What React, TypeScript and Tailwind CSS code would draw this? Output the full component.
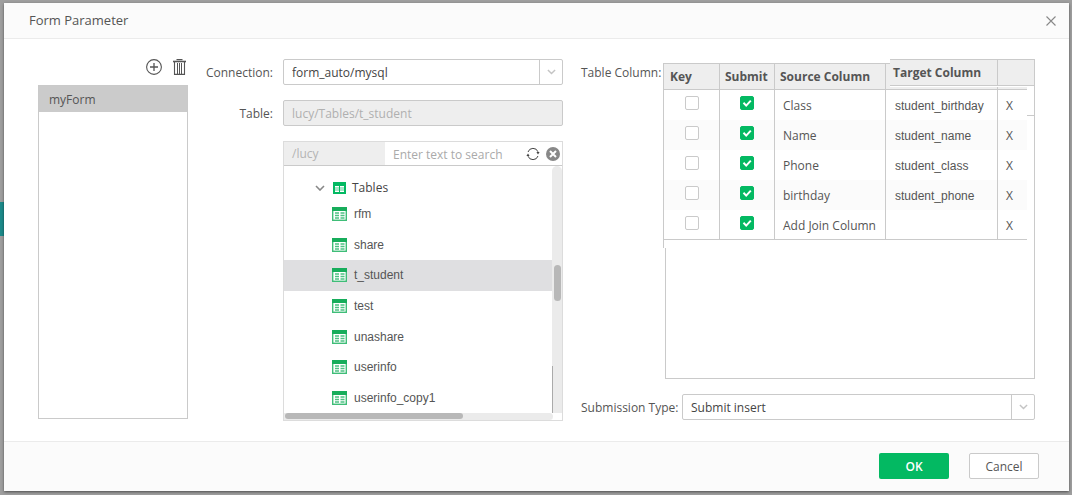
import { useState } from 'react';

const TREE_ITEMS = ['rfm', 'share', 't_student', 'test', 'unashare', 'userinfo', 'userinfo_copy1'];

const COLUMNS = [
  { source: 'Class', target: 'student_birthday' },
  { source: 'Name', target: 'student_name' },
  { source: 'Phone', target: 'student_class' },
  { source: 'birthday', target: 'student_phone' },
  { source: 'Add Join Column', target: '' },
];

const HEAD = 'flex h-[27px] items-center border-t border-b border-[#cacaca] bg-[#eee] pt-px';

function ChevronIcon({ className }: { className: string }) {
  return (
    <svg viewBox="0 0 10 6" fill="none" stroke="currentColor" className={className} aria-hidden="true">
      <path d="M1 1l4 4 4-4" strokeWidth="1.6" />
    </svg>
  );
}

function TableIcon() {
  return (
    <svg width="15" height="14" viewBox="0 0 15 14" className="shrink-0" aria-hidden="true">
      <rect x="0.7" y="0.7" width="13.6" height="12.6" fill="#fff" stroke="#3fbd78" strokeWidth="1.4" />
      <path d="M0 0h15v4H0z" fill="#17ad5b" />
      <path d="M3 6h4M3 8.5h4M3 11h4M8.5 6h4M8.5 8.5h4M8.5 11h4" stroke="#4cc182" strokeWidth="1.5" />
    </svg>
  );
}

function Select({ id, options }: { id: string; options: string[] }) {
  return (
    <div className="relative h-[26px] min-w-0 flex-1">
      <select
        id={id}
        className="h-full w-full appearance-none rounded-xs border border-[#cacaca] bg-white pt-px pr-7 pl-2 text-[#444] outline-none"
      >
        {options.map((option) => (
          <option key={option}>{option}</option>
        ))}
      </select>
      <span className="pointer-events-none absolute inset-y-0 right-0 flex w-6 items-center justify-center border-l border-[#cacaca] text-[#c4c4c4]">
        <ChevronIcon className="w-[9px]" />
      </span>
    </div>
  );
}

function Check({ label, defaultChecked = false }: { label: string; defaultChecked?: boolean }) {
  return (
    <label className="mx-auto mb-1 grid size-[14px]">
      <input
        type="checkbox"
        aria-label={label}
        defaultChecked={defaultChecked}
        className="peer size-[14px] appearance-none rounded-xs border border-[#cacaca] bg-white [grid-area:1/1] checked:border-[#03b962] checked:bg-[#03b962]"
      />
      <svg
        viewBox="0 0 14 14"
        fill="none"
        stroke="#fff"
        strokeWidth="2"
        className="pointer-events-none invisible size-[14px] [grid-area:1/1] peer-checked:visible"
        aria-hidden="true"
      >
        <path d="M3.5 6.8l2.7 2.8 4.6-5" />
      </svg>
    </label>
  );
}

function FormList() {
  return (
    <div className="flex w-[150px] shrink-0 flex-col">
      <div className="flex h-[26px] items-start justify-end gap-[10px] pr-px">
        <button type="button" aria-label="Add form" className="text-[#555]">
          <svg width="16" height="16" viewBox="0 0 16 16" fill="none" stroke="currentColor">
            <circle cx="8" cy="8" r="7.4" strokeWidth="1.1" />
            <path d="M8 4v8M4 8h8" strokeWidth="1.3" />
          </svg>
        </button>
        <button type="button" aria-label="Delete form" className="text-[#555]">
          <svg width="15" height="16" viewBox="0 0 15 16" fill="none" stroke="currentColor">
            <path d="M4.5 0.6h6" strokeWidth="1.2" />
            <path d="M1 2.5h13" strokeWidth="1.6" />
            <path d="M2.5 3v12.4h10V3" strokeWidth="1.1" />
            <path d="M5.5 4v11M7.5 4v11M9.5 4v11" strokeWidth="1" />
          </svg>
        </button>
      </div>
      <ul className="flex-1 border border-[#cacaca]">
        <li className="flex h-[26px] items-center bg-[#cbcbcb] px-[10px] pt-[2px]">myForm</li>
      </ul>
    </div>
  );
}

function TableTree() {
  const [selected, setSelected] = useState('t_student');

  return (
    <div className="flex min-w-0 flex-1 flex-col border border-[#dcdcdc]">
      <div className="flex h-6 items-center border-b border-[#cacaca]">
        <span className="flex h-full w-[101px] shrink-0 items-center bg-[#eee] pt-px pl-2 text-[#b4b4b4]">
          /lucy
        </span>
        <input
          type="text"
          aria-label="Search tables"
          placeholder="Enter text to search"
          className="h-full min-w-0 flex-1 px-2 pt-px outline-none placeholder:text-[#aaa]"
        />
        <button type="button" aria-label="Refresh" className="mr-[6px] shrink-0 text-[#444]">
          <svg width="14" height="14" viewBox="0 0 14 14" fill="none" stroke="currentColor">
            <path d="M2 5a5.3 5.3 0 0 1 10-.2M12 9a5.3 5.3 0 0 1-10 .2" />
            <path d="M10.4 5h3.2L12 7.4zM.4 9h3.2L2 6.6z" fill="currentColor" stroke="none" />
          </svg>
        </button>
        <button type="button" aria-label="Clear" className="mr-[2px] shrink-0 text-[#888]">
          <svg width="14" height="14" viewBox="0 0 14 14">
            <circle cx="7" cy="7" r="7" fill="currentColor" />
            <path d="M4 4l6 6M10 4l-6 6" stroke="#fff" strokeWidth="2" />
          </svg>
        </button>
      </div>
      <div className="flex flex-1">
        <div className="flex min-w-0 flex-1 flex-col">
          <div className="flex h-[33px] items-end pb-[3px] pl-[31px]">
            <button type="button" className="flex items-center gap-2 text-[#444]">
              <ChevronIcon className="w-[10px] text-[#888]" />
              <span className="flex items-center gap-[6px]">
                <svg width="13" height="12" viewBox="0 0 13 12" aria-hidden="true">
                  <path d="M0 0h13v12H0z" fill="#03b962" />
                  <path d="M2 4h4v6H2zM7 4h4v6H7z" fill="#fff" />
                  <path d="M2 6h9M2 8h9" stroke="#03b962" strokeWidth="0.7" />
                </svg>
                Tables
              </span>
            </button>
          </div>
          <ul className="flex flex-1 flex-col font-['Liberation_Sans',sans-serif]">
            {TREE_ITEMS.map((item) => (
              <li key={item} className="flex min-h-[30px] flex-1">
                <button
                  type="button"
                  onClick={() => setSelected(item)}
                  className={`flex w-full items-center gap-[7px] pl-12 ${
                    item === selected ? 'bg-[#dfdfe1]' : ''
                  }`}
                >
                  <TableIcon />
                  {item}
                </button>
              </li>
            ))}
          </ul>
        </div>
        <div className="flex w-[10px] shrink-0 flex-col rounded-t-md bg-[#ebebeb] pt-[99px]">
          <div className="mr-px ml-[2px] h-9 rounded-full bg-[#b8b8b8]" />
          <div className="mt-[65px] flex-1 border-l border-[#aaa]" />
        </div>
      </div>
      <div className="mr-[9px] h-[7px] rounded-r-full bg-[#ebebeb] px-px">
        <div className="h-[6px] w-2/3 rounded-full bg-[#b8b8b8]" />
      </div>
    </div>
  );
}

function ColumnTable() {
  return (
    <div className="flex min-w-0 flex-1 flex-col border-r border-[#cacaca]">
      <table className="w-full table-fixed border-separate border-spacing-0 text-left">
        <colgroup>
          <col className="w-[57px]" />
          <col className="w-[55px]" />
          <col className="w-[111px]" />
          <col />
          <col className="w-[29px]" />
          <col className="w-[7px]" />
        </colgroup>
        <thead className="font-bold text-[#555]">
          <tr className="h-[31px]">
            <th className="p-0 align-bottom">
              <div className={`${HEAD} border-r border-l pl-[6px]`}>Key</div>
            </th>
            <th className="p-0 align-bottom">
              <div className={`${HEAD} border-r pl-[5px]`}>Submit</div>
            </th>
            <th className="p-0 align-bottom">
              <div className={`${HEAD} border-r pl-[5px]`}>Source Column</div>
            </th>
            <th className="p-0 align-top">
              <div className="flex">
                <div className={`${HEAD} mt-1 w-1`} />
                <div className="flex-1">
                  <div className={`${HEAD} border-r pl-[3px]`}>Target Column</div>
                  <div className="mt-px h-[3px] border-r border-b border-[#cacaca] bg-[#eee]" />
                </div>
              </div>
            </th>
            <th className="p-0 align-top" aria-label="Remove">
              <div className={HEAD} />
              <div className="mt-px h-[3px] border-b border-[#cacaca] bg-[#eee]" />
            </th>
            <td className="p-0 align-top">
              <div className={HEAD} />
            </td>
          </tr>
        </thead>
        <tbody className="[&_td]:border-[#cacaca] [&_td]:p-0 [&>tr:last-child>td:not(:last-child)]:border-b [&>tr:nth-child(even)>td:not(:last-child)]:bg-[#fbfbfb]">
          {COLUMNS.map((column, index) => (
            <tr key={column.source} className="h-[30px]">
              <td className="border-r border-l">
                <Check label={`${column.source} key`} />
              </td>
              <td className="border-r">
                <Check label={`${column.source} submit`} defaultChecked />
              </td>
              <td className="border-r">
                <div className="pt-[2px] pl-2">{column.source}</div>
              </td>
              <td className="border-r font-['Liberation_Sans',sans-serif]">
                <div className="pt-[2px] pl-[9px]">{column.target}</div>
              </td>
              <td>
                <button type="button" aria-label={`Remove ${column.source}`} className="block pt-[2px] pl-2">
                  X
                </button>
              </td>
              <td className="align-top">
                {index === 0 && <div className="h-[26px] border-b border-[#cacaca]" />}
              </td>
            </tr>
          ))}
        </tbody>
      </table>
      <div className="h-2 w-px shrink-0 bg-[#cacaca]" />
      <div className="ml-[2px] flex-1 border-b border-l border-[#cacaca]" />
    </div>
  );
}

export default function App() {
  return (
    <div className="flex min-h-screen bg-[#9f9f9f] font-['Open_Sans','Noto_Sans',sans-serif] text-xs text-[#555]">
      <div className="flex w-1 shrink-0 flex-col pt-[202px]" aria-hidden="true">
        <div className="h-[34px] bg-[#1c8a8a]" />
      </div>
      <div
        role="dialog"
        aria-label="Form Parameter"
        className="mt-[3px] mr-[3px] mb-1 flex min-w-0 flex-1 flex-col bg-white shadow-sm shadow-black/40"
      >
        <header className="flex h-9 shrink-0 items-center justify-between border-b border-[#ebebeb] bg-[#fbfbfb] pr-3 pl-[25px]">
          <h1 className="pt-px text-[13px]">Form Parameter</h1>
          <button type="button" aria-label="Close" className="text-[#888]">
            <svg width="12" height="12" viewBox="0 0 12 12" fill="none" stroke="currentColor">
              <path d="M1.5 1.5l9 9M10.5 1.5l-9 9" strokeWidth="1.1" />
            </svg>
          </button>
        </header>

        <main className="flex flex-1 px-[34px] py-5">
          <div className="mb-[2px] flex">
            <FormList />
          </div>

          <div className="ml-3 flex w-[363px] shrink-0 flex-col gap-[15px]">
            <div className="flex items-center gap-[10px]">
              <label htmlFor="connection" className="w-[73px] pt-px text-right whitespace-nowrap">
                Connection:
              </label>
              <Select id="connection" options={['form_auto/mysql']} />
            </div>
            <div className="flex items-center gap-[10px]">
              <label htmlFor="table" className="w-[73px] pt-px text-right">
                Table:
              </label>
              <input
                id="table"
                type="text"
                readOnly
                value="lucy/Tables/t_student"
                className="h-[26px] min-w-0 flex-1 rounded-xs border border-[#cacaca] bg-[#eee] px-2 pt-px text-[#b0b0b0] outline-none"
              />
            </div>
            <div className="flex flex-1 pl-[83px]">
              <TableTree />
            </div>
          </div>

          <div className="ml-[18px] flex min-w-0 flex-1 flex-col gap-[15px] pb-px">
            <div className="flex flex-1">
              <span className="w-[82px] shrink-0 pt-[6px] whitespace-nowrap">Table Column:</span>
              <ColumnTable />
            </div>
            <div className="flex items-center">
              <label htmlFor="submission" className="w-[101px] shrink-0 pt-px whitespace-nowrap">
                Submission Type:
              </label>
              <Select id="submission" options={['Submit insert']} />
            </div>
          </div>
        </main>

        <footer className="flex shrink-0 justify-end gap-5 border-t border-[#ebebeb] bg-[#fbfbfb] pt-[11px] pr-[30px] pb-3">
          <button type="button" className="h-[26px] w-[70px] rounded-xs bg-[#03b962] pt-px font-semibold text-white">
            OK
          </button>
          <button type="button" className="h-[26px] w-[70px] rounded-xs border border-[#cacaca] bg-white pt-px">
            Cancel
          </button>
        </footer>
      </div>
    </div>
  );
}
